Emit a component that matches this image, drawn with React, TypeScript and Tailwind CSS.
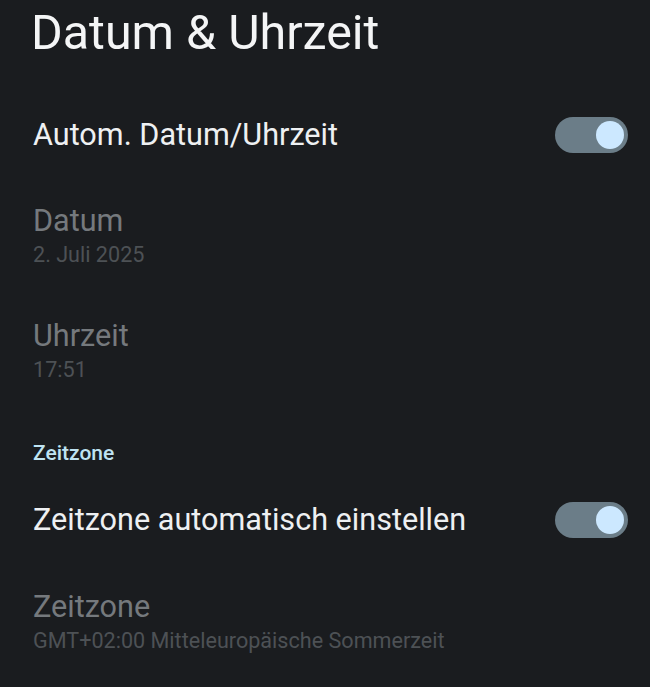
function Toggle() {
  return (
    <div className="flex h-[36px] w-[73px] items-center justify-end rounded-full bg-[#6b7d88] pr-[4px]">
      <div className="h-[28px] w-[28px] rounded-full bg-[#cce8ff]" />
    </div>
  );
}

function ToggleRow({ label, className }: { label: string; className: string }) {
  return (
    <div className={`flex items-center justify-between pl-[33px] pr-[22px] ${className}`}>
      <span className="text-[30.6px] leading-[36px] text-[#eef0f2]">{label}</span>
      <Toggle />
    </div>
  );
}

function InfoRow({ title, value, className }: { title: string; value: string; className: string }) {
  return (
    <div className={`flex flex-col pl-[33px] ${className}`}>
      <span className="text-[30.6px] leading-[36px] text-[#75797d]">{title}</span>
      <span className="mt-[2px] text-[21.6px] leading-[28px] text-[#4d5155]">{value}</span>
    </div>
  );
}

export default function App() {
  return (
    <div className="h-[687px] w-[650px] overflow-hidden bg-[#1a1c1f] font-['Roboto',sans-serif]">
      <h1 className="pl-[31px] pt-[1px] text-[48.4px] leading-[64px] text-[#f4f5f6]">Datum &amp; Uhrzeit</h1>
      <ToggleRow label="Autom. Datum/Uhrzeit" className="mt-[52px]" />
      <InfoRow title="Datum" value="2. Juli 2025" className="mt-[50px]" />
      <InfoRow title="Uhrzeit" value="17:51" className="mt-[49px]" />
      <div className="mt-[57px] pl-[33px] text-[21px] font-medium leading-[24px] text-[#bfe3f2]">Zeitzone</div>
      <ToggleRow label="Zeitzone automatisch einstellen" className="mt-[37px]" />
      <InfoRow title="Zeitzone" value="GMT+02:00 Mitteleuropäische Sommerzeit" className="mt-[51px]" />
    </div>
  );
}
